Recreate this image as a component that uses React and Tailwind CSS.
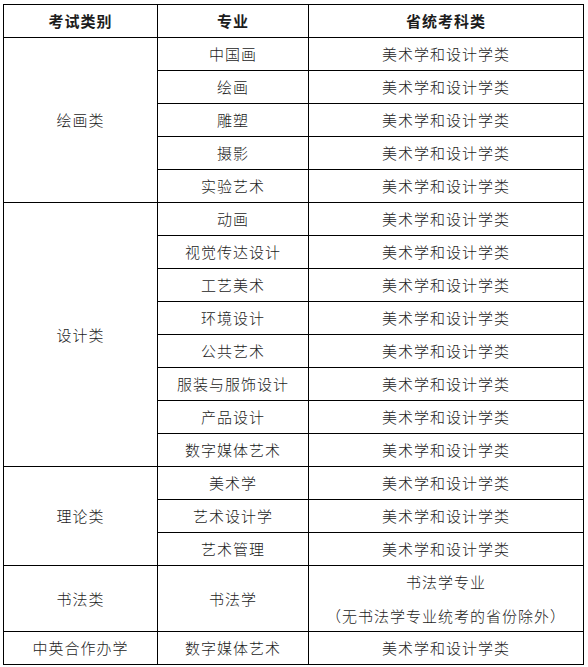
import React from 'react';

const font = { fontFamily: '"Noto Sans CJK SC", "Liberation Serif", serif' };

const groups = [
  { name: '绘画类', items: ['中国画', '绘画', '雕塑', '摄影', '实验艺术'] },
  {
    name: '设计类',
    items: ['动画', '视觉传达设计', '工艺美术', '环境设计', '公共艺术', '服装与服饰设计', '产品设计', '数字媒体艺术'],
  },
  { name: '理论类', items: ['美术学', '艺术设计学', '艺术管理'] },
];

const cell = 'border border-black text-center align-middle p-0';

export default function App() {
  return (
    <div className="w-[588px] h-[667px] bg-white pt-[4px] pl-[3px]">
      <table
        className="border-collapse table-fixed text-[15px] text-[#1c1c1c] tracking-[1px] font-light leading-[20px]"
        style={font}
      >
        <colgroup>
          <col className="w-[154px]" />
          <col className="w-[151px]" />
          <col className="w-[275px]" />
        </colgroup>
        <tbody>
          <tr className="h-[33px]">
            <th className={cell + ' font-bold'}>考试类别</th>
            <th className={cell + ' font-bold'}>专业</th>
            <th className={cell + ' font-bold'}>省统考科类</th>
          </tr>
          {groups.map((g) =>
            g.items.map((item, i) => (
              <tr key={g.name + item} className="h-[33px]">
                {i == 0 && (
                  <td rowSpan={g.items.length} className={cell}>
                    {g.name}
                  </td>
                )}
                <td className={cell}>{item}</td>
                <td className={cell}>美术学和设计学类</td>
              </tr>
            ))
          )}
          <tr className="h-[66px]">
            <td className={cell}>书法类</td>
            <td className={cell}>书法学</td>
            <td className={cell}>
              <div>书法学专业</div>
              <div className="mt-[14px]">（无书法学专业统考的省份除外）</div>
            </td>
          </tr>
          <tr className="h-[33px]">
            <td className={cell}>中英合作办学</td>
            <td className={cell}>数字媒体艺术</td>
            <td className={cell}>美术学和设计学类</td>
          </tr>
        </tbody>
      </table>
    </div>
  );
}
